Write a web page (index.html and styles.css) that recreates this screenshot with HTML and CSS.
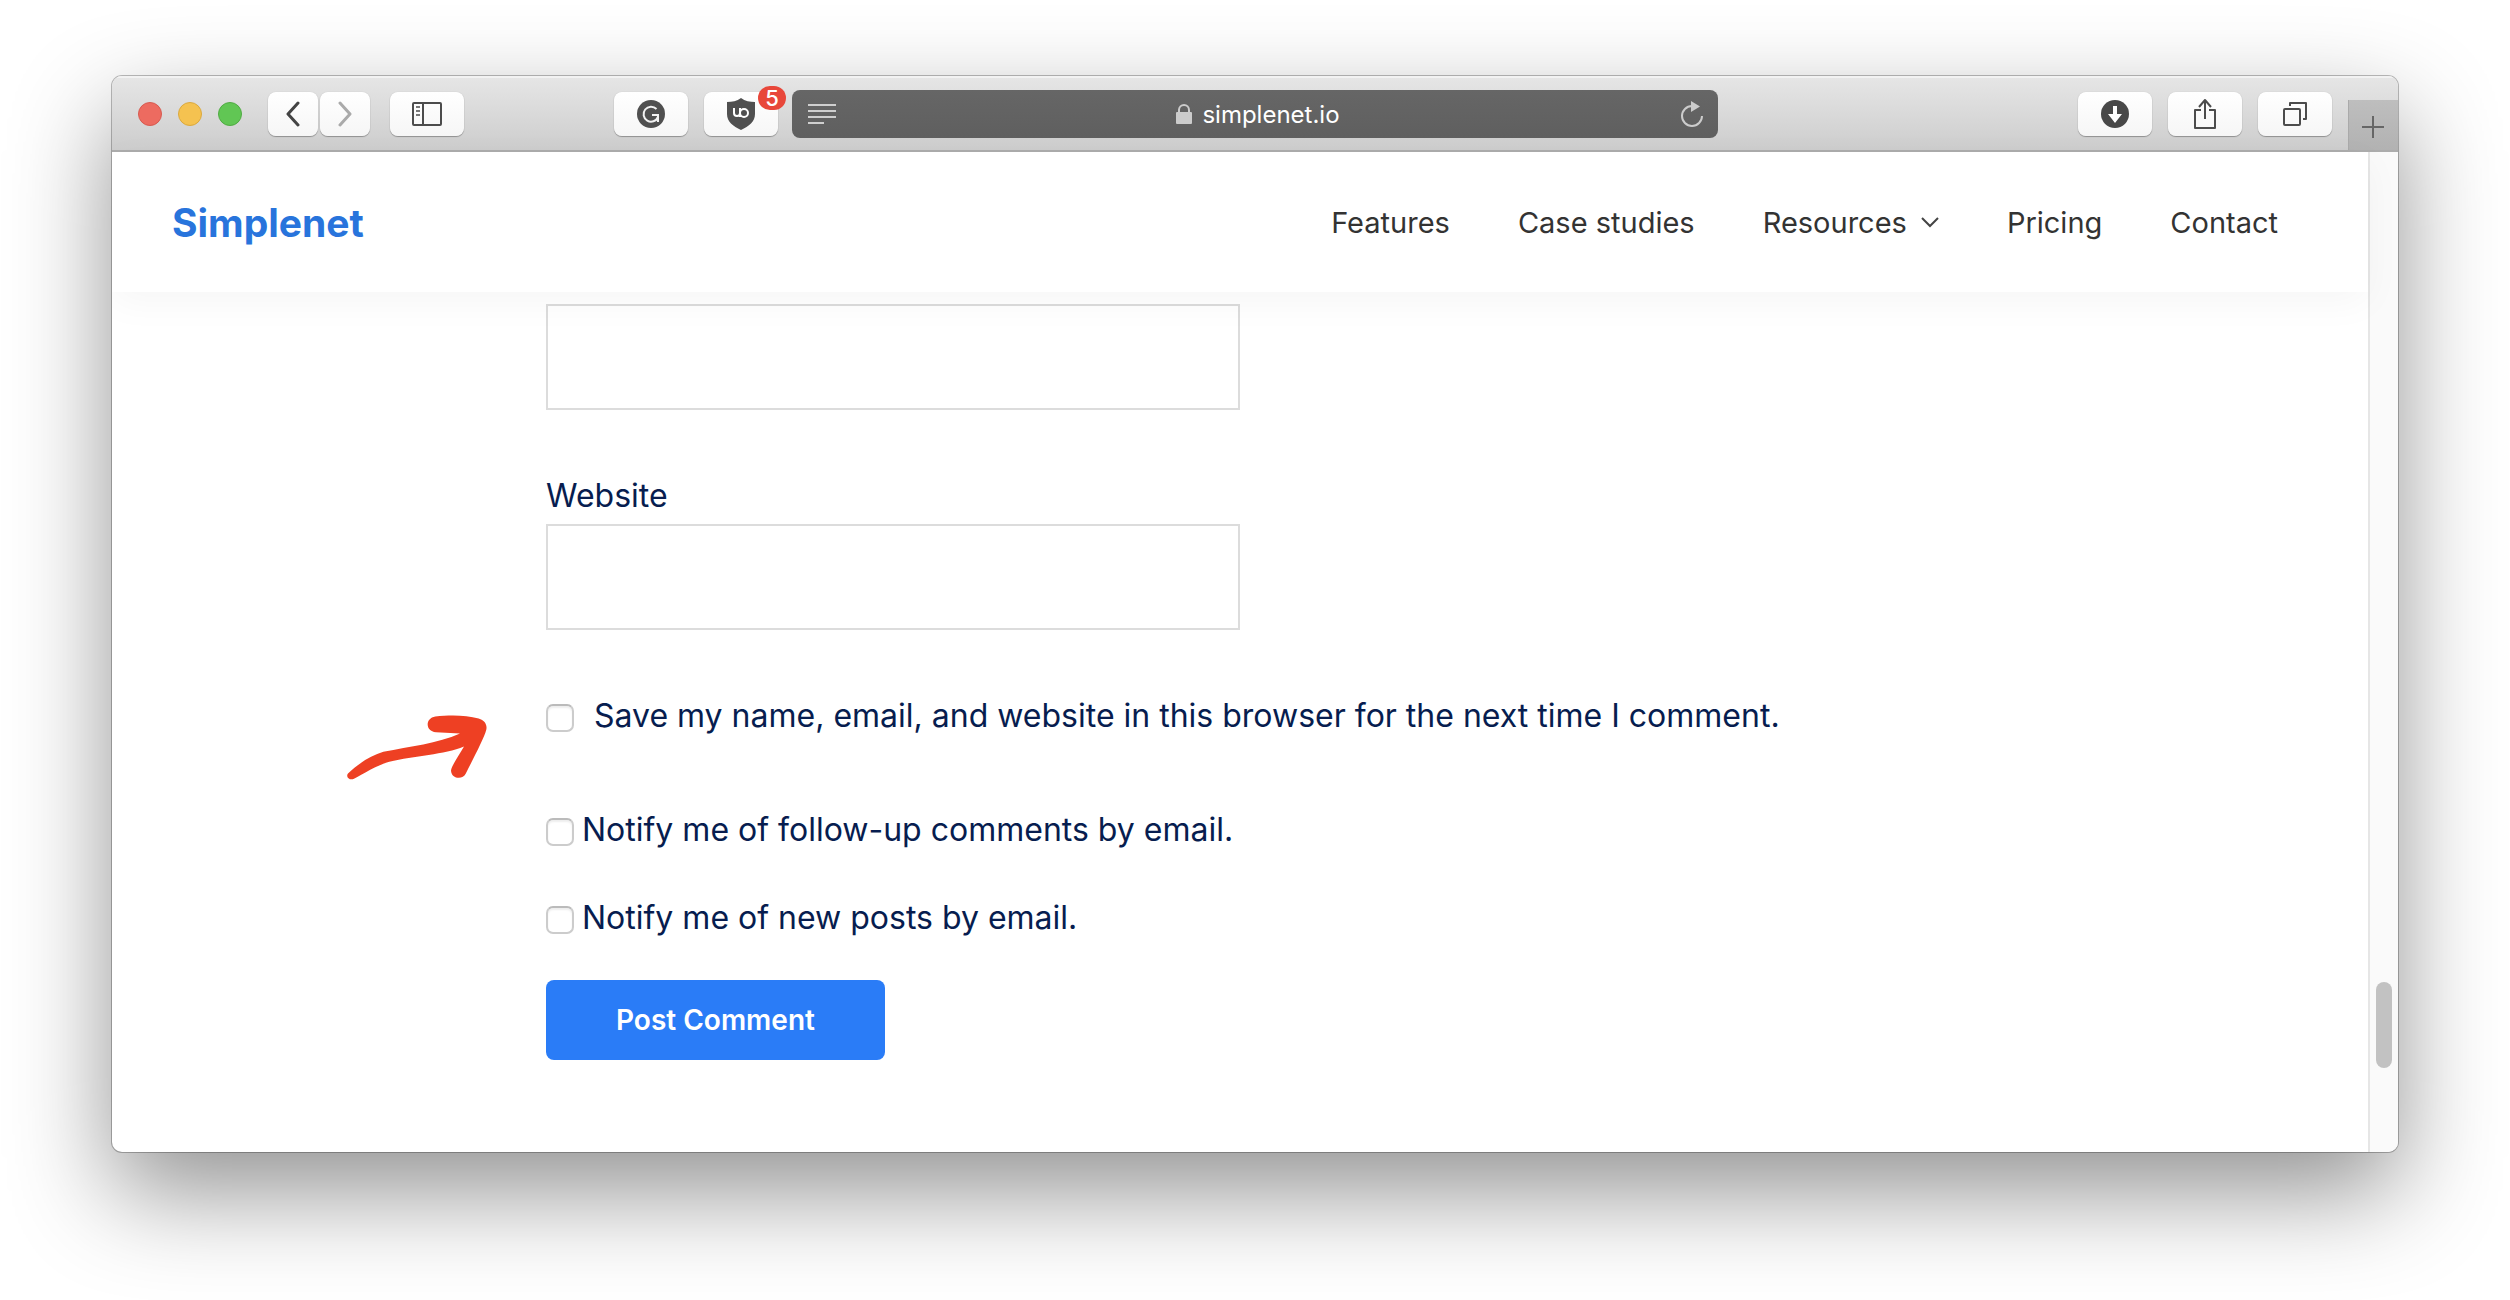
FILE: index.html
```html
<!DOCTYPE html>
<html lang="en">
<head>
	<meta charset="utf-8">
	<title>Simplenet</title>
	<link rel="stylesheet" href="styles.css">
</head>
<body>
	<div class="window">
		<div class="toolbar">
			<div class="lights">
				<span class="light red"></span>
				<span class="light yellow"></span>
				<span class="light green"></span>
			</div>
			<div class="history">
				<button class="tool small" type="button" aria-label="Back">
					<svg width="16" height="26" viewBox="0 0 16 26"><path d="M13 2 3 13l10 11" fill="none" stroke="#444" stroke-width="3" stroke-linecap="round" stroke-linejoin="round"/></svg>
				</button>
				<button class="tool small" type="button" aria-label="Forward">
					<svg width="16" height="26" viewBox="0 0 16 26"><path d="M3 2l10 11L3 24" fill="none" stroke="#aaa" stroke-width="3" stroke-linecap="round" stroke-linejoin="round"/></svg>
				</button>
			</div>
			<button class="tool" type="button" aria-label="Sidebar">
				<svg width="30" height="24" viewBox="0 0 30 24"><rect x="1" y="1" width="28" height="22" rx="1" fill="none" stroke="#4c4c4c" stroke-width="2"/><path d="M11 1v22" stroke="#4c4c4c" stroke-width="2"/><path d="M4 5h4M4 9h4M4 13h4" stroke="#777" stroke-width="2"/></svg>
			</button>
			<div class="center">
				<button class="tool" type="button" aria-label="Grammar">
					<svg width="28" height="28" viewBox="0 0 28 28"><circle cx="14" cy="14" r="14" fill="#505050"/><path d="M19.500 9a7.500 7.500 0 1 0 1.500 8M15 15h6v7" fill="none" stroke="#f2f2f2" stroke-width="2"/></svg>
				</button>
				<button class="tool blocker" type="button" aria-label="Blocker">
					<svg width="28" height="32" viewBox="0 0 28 32"><path d="M14 0c4 3 9 4 14 4v12c0 8-6 12-14 16C6 28 0 24 0 16V4c5 0 10-1 14-4z" fill="#505050"/><path d="M7 10v5a3 3 0 0 0 6 0v-5M13 14v5" fill="none" stroke="#fff" stroke-width="2"/><circle cx="17" cy="15" r="4" fill="none" stroke="#fff" stroke-width="2"/></svg>
					<span class="badge">5</span>
				</button>
				<div class="address">
					<svg width="28" height="20" viewBox="0 0 28 20"><path d="M0 1h28M0 7h28M0 13h28M0 19h16" stroke="#cfcfcf" stroke-width="2"/></svg>
					<div class="site">
						<svg width="16" height="20" viewBox="0 0 16 20"><rect y="8" width="16" height="12" rx="1" fill="#ccc"/><path d="M3 9V6a5 5 0 0 1 10 0v3" fill="none" stroke="#ccc" stroke-width="2"/></svg>
						<span>simplenet.io</span>
					</div>
					<button class="reload" type="button" aria-label="Reload">
						<svg width="24" height="28" viewBox="0 0 24 28"><path d="M12 6a10 10 0 1 0 10 10" fill="none" stroke="#ccc" stroke-width="2"/><path d="M11 1l9 5.500-9 5.500z" fill="#ccc"/></svg>
					</button>
				</div>
			</div>
			<div class="actions">
				<button class="tool" type="button" aria-label="Downloads">
					<svg width="28" height="28" viewBox="0 0 28 28"><circle cx="14" cy="14" r="14" fill="#484848"/><path d="M12 6h4v8h5l-7 9-7-9h5z" fill="#fff"/></svg>
				</button>
				<button class="tool" type="button" aria-label="Share">
					<svg width="24" height="32" viewBox="0 0 24 32"><path d="M8 12H2v18h20V12h-6M12 21V2M6 9l6-7 6 7" fill="none" stroke="#4c4c4c" stroke-width="2" stroke-linejoin="round"/></svg>
				</button>
				<button class="tool" type="button" aria-label="Tabs">
					<svg width="24" height="24" viewBox="0 0 24 24"><rect x="1" y="7" width="16" height="16" rx="1" fill="none" stroke="#4c4c4c" stroke-width="2"/><path d="M7 4V1h16v16h-3" fill="none" stroke="#4c4c4c" stroke-width="2" stroke-linejoin="round"/></svg>
				</button>
			</div>
			<button class="newtab" type="button" aria-label="New tab">
				<svg width="22" height="22" viewBox="0 0 22 22"><path d="M11 0v22M0 11h22" stroke="#666" stroke-width="2"/></svg>
			</button>
		</div>

		<div class="view">
			<div class="page">
				<header class="header">
					<a class="logo" href="#">Simplenet</a>
					<nav class="menu">
						<a href="#">Features</a>
						<a href="#">Case studies</a>
						<a href="#">Resources
							<svg width="18" height="12" viewBox="0 0 18 12"><path d="M1 2l8 8 8-8" fill="none" stroke="#444" stroke-width="2"/></svg>
						</a>
						<a href="#">Pricing</a>
						<a href="#">Contact</a>
					</nav>
				</header>

				<form class="comment">
					<input class="field" type="email" aria-label="Email">
					<label class="title" for="website">Website</label>
					<input class="field" type="url" id="website">
					<div class="check save">
						<svg class="arrow" width="142" height="67" viewBox="50 104 426 200"><path d="M56 282C85 254 124 228 162 217C242 201 325 192 392 162L320 158C287 155 287 116 318 111C360 106 410 106 448 117C466 122 474 136 471 150C465 176 427 246 409 283C400 302 365 298 365 272C370 253 391 224 404 201C346 226 254 228 180 247C141 257 104 283 74 298C61 304 48 292 56 282Z" fill="#ee4023"/></svg>
						<input type="checkbox" id="save">
						<label for="save">Save my name, email, and website in this browser for the next time I comment.</label>
					</div>
					<div class="check">
						<input type="checkbox" id="followup">
						<label for="followup">Notify me of follow-up comments by email.</label>
					</div>
					<div class="check">
						<input type="checkbox" id="posts">
						<label for="posts">Notify me of new posts by email.</label>
					</div>
					<button class="submit" type="button">Post Comment</button>
				</form>
			</div>
			<div class="scrollbar"><div class="thumb"></div></div>
		</div>
	</div>
</body>
</html>
```
FILE: styles.css
```css
*{
	box-sizing: border-box;
}
body{
	margin: 0;
	padding: 76px 112px 148px;
	background: #fff;
	font-family: Inter, "Liberation Sans", sans-serif;
}
a{
	color: inherit;
	text-decoration: none;
}
button{
	font-family: inherit;
	border: 0;
	padding: 0;
}
svg{
	display: block;
	flex: none;
}
.window{
	display: flex;
	flex-direction: column;
	min-height: calc(100vh - 224px);
	border-radius: 10px;
	overflow: hidden;
	background: #fff;
	box-shadow: 0 0 0 1px rgba(0,0,0,.26), 0 40px 100px rgba(0,0,0,.43);
}

/* browser toolbar */
.toolbar{
	display: flex;
	align-items: center;
	height: 76px;
	padding: 2px 0 0 26px;
	background: linear-gradient(#e6e6e6, #cdcdcd);
	border-bottom: 2px solid #acacac;
	box-shadow: inset 0 2px 0 #f2f2f2;
}
.lights{
	display: flex;
	gap: 16px;
	margin-right: 26px;
}
.light{
	width: 24px;
	height: 24px;
	border-radius: 50%;
}
.red{
	background: #ed6b60;
	border: 1px solid #d75a50;
}
.yellow{
	background: #f5c250;
	border: 1px solid #dba93e;
}
.green{
	background: #61c654;
	border: 1px solid #50ab43;
}
.history{
	display: flex;
	gap: 2px;
	margin-right: 20px;
}
.tool{
	display: flex;
	align-items: center;
	justify-content: center;
	width: 74px;
	height: 44px;
	border-radius: 8px;
	background: linear-gradient(#fff, #f6f6f6);
	box-shadow: 0 1px 1px rgba(0,0,0,.3), 0 0 1px rgba(0,0,0,.2);
}
.small{
	width: 50px;
}
.center{
	flex: 1;
	display: flex;
	align-items: center;
	gap: 14px;
	margin: 0 360px 0 150px;
}
.blocker{
	position: relative;
	margin-left: 2px;
}
.badge{
	position: absolute;
	top: -6px;
	right: -8px;
	width: 28px;
	height: 24px;
	border-radius: 12px;
	background: #e8473a;
	color: #fff;
	font-size: 22px;
	font-weight: 500;
	line-height: 24px;
	text-align: center;
}
.address{
	flex: 1;
	display: flex;
	align-items: center;
	justify-content: space-between;
	height: 48px;
	padding: 0 14px 0 16px;
	border-radius: 8px;
	background: linear-gradient(#666, #5f5f5f);
	color: #fff;
}
.site{
	display: flex;
	align-items: center;
	gap: 10px;
	font-size: 24px;
}
.reload{
	background: none;
}
.actions{
	display: flex;
	gap: 16px;
	margin-right: 16px;
}
.newtab{
	display: flex;
	align-items: center;
	justify-content: center;
	align-self: flex-end;
	width: 50px;
	height: 50px;
	padding: 4px 2px 0 0;
	border-left: 1px solid #aaa;
	background: linear-gradient(#bebebe, #b2b2b2);
}

/* page */
.view{
	flex: 1;
	display: flex;
}
.page{
	flex: 1;
}
.header{
	position: relative;
	display: flex;
	align-items: center;
	justify-content: space-between;
	height: 140px;
	padding: 0 90px 0 60px;
	background: #fff;
	box-shadow: 0 10px 36px rgba(0,0,0,.04);
}
.logo{
	color: #2874dc;
	font-size: 39px;
	font-weight: 700;
}
.menu{
	display: flex;
	gap: 68px;
	color: #333;
	font-size: 29px;
}
.menu a{
	display: flex;
	align-items: center;
	gap: 14px;
}
.comment{
	max-width: 1388px;
	margin: 0 auto;
	padding: 12px 0 92px;
	color: #071d4f;
	font-size: 32px;
	line-height: 56px;
}
.field{
	display: block;
	width: 50%;
	height: 106px;
	margin-bottom: 58px;
	padding: 0 24px;
	border: 2px solid #dcdcdc;
	background: none;
	font: inherit;
}
.title{
	display: block;
}
.check{
	display: flex;
	align-items: center;
	gap: 8px;
	margin-bottom: 32px;
}
.check input{
	appearance: none;
	width: 28px;
	height: 28px;
	margin: 4px 0 0;
	border: 2px solid #ccc;
	border-top-color: #bbb;
	border-radius: 7px;
	background: #fff;
	box-shadow: inset 0 2px 2px #eee;
}
.save{
	position: relative;
	gap: 20px;
	margin-bottom: 58px;
}
.arrow{
	position: absolute;
	top: 26px;
	left: -200px;
}
.submit{
	display: block;
	height: 80px;
	margin-top: 34px;
	padding: 0 70px;
	border-radius: 8px;
	background: #2a7cf7;
	color: #fff;
	font-size: 28px;
	font-weight: 600;
}
.scrollbar{
	display: flex;
	flex-direction: column;
	justify-content: flex-end;
	width: 30px;
	padding: 0 6px 84px;
	border-left: 2px solid #e6e6e6;
	background: #fafafa;
}
.thumb{
	width: 16px;
	height: 86px;
	border-radius: 8px;
	background: #c2c2c2;
}
```
